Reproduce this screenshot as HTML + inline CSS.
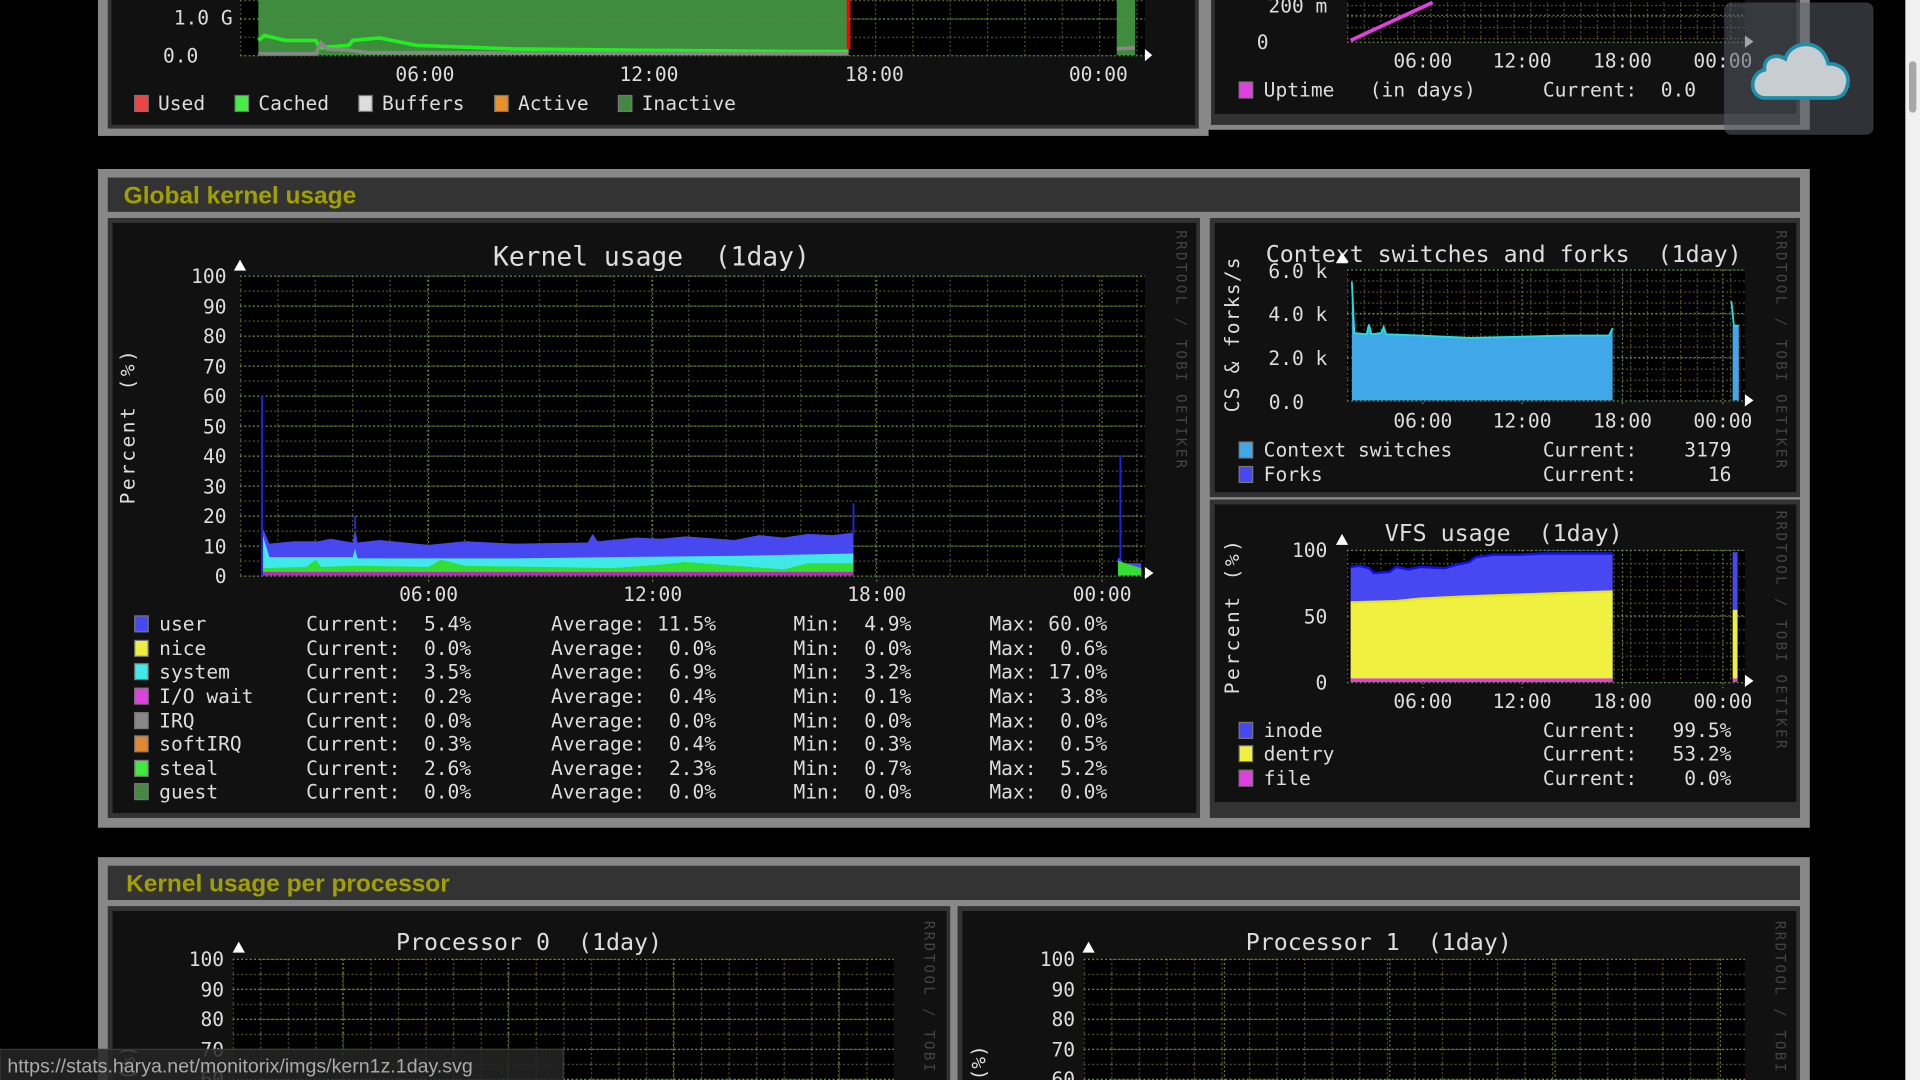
<!DOCTYPE html>
<html><head><meta charset="utf-8"><style>
html,body{margin:0;padding:0;background:#000;width:1920px;height:1080px;overflow:hidden}
svg{display:block}
text{font-family:"DejaVu Sans Mono","Liberation Mono",monospace;fill:#ddd;white-space:pre}
.h{font-family:"Liberation Sans",sans-serif;font-weight:bold;fill:#a0a000;font-size:20px}
.t{font-size:21.5px;fill:#ddd}
.l{font-size:16px}
.w{font-size:11.5px;fill:#444;letter-spacing:2px}
.mj{stroke:#5f8a4a;stroke-width:1;stroke-dasharray:1.5,2}
</style></head><body>
<svg width="1920" height="1080" viewBox="0 0 1568 882" preserveAspectRatio="none" xmlns="http://www.w3.org/2000/svg">
<defs>
<pattern id="g1" width="30.5" height="12.25" patternUnits="userSpaceOnUse" x="196" y="225">
<path d="M0 0.5H30.5M0.5 0V12.25" stroke="#58582a" stroke-width="1" stroke-dasharray="1.5,2" fill="none"/></pattern>
<pattern id="g2" width="13.6" height="9" patternUnits="userSpaceOnUse" x="1100" y="220">
<path d="M0 0.5H13.6M0.5 0V9" stroke="#58582a" stroke-width="1" stroke-dasharray="1.5,2" fill="none"/></pattern>
<pattern id="g3" width="13.6" height="10.8" patternUnits="userSpaceOnUse" x="1100" y="449">
<path d="M0 0.5H13.6M0.5 0V10.8" stroke="#58582a" stroke-width="1" stroke-dasharray="1.5,2" fill="none"/></pattern>
<pattern id="g4" width="22.5" height="12.25" patternUnits="userSpaceOnUse" x="190" y="783">
<path d="M0 0.5H22.5M0.5 0V12.25" stroke="#58582a" stroke-width="1" stroke-dasharray="1.5,2" fill="none"/></pattern>
<pattern id="g5" width="22.5" height="12.25" patternUnits="userSpaceOnUse" x="885" y="783">
<path d="M0 0.5H22.5M0.5 0V12.25" stroke="#58582a" stroke-width="1" stroke-dasharray="1.5,2" fill="none"/></pattern>
<pattern id="g6" width="30.5" height="15" patternUnits="userSpaceOnUse" x="196" y="0">
<path d="M0 0.5H30.5M0.5 0V15" stroke="#58582a" stroke-width="1" stroke-dasharray="1.5,2" fill="none"/></pattern>
</defs>
<rect width="1568" height="882" fill="#000"/>

<!-- ===== top sections ===== -->
<rect x="80" y="-10" width="907" height="121" fill="#888"/>
<rect x="88" y="-10" width="891" height="115" fill="#333"/>
<rect x="91" y="-10" width="885" height="112" fill="#111"/>
<rect x="985" y="-10" width="493" height="116" fill="#888"/>
<rect x="989" y="-10" width="481" height="112" fill="#333"/>
<rect x="992" y="-10" width="475" height="103" fill="#111"/>

<!-- memory graph -->
<rect x="196" y="0" width="739" height="45" fill="#000"/>
<rect x="196" y="0" width="739" height="45" fill="url(#g6)"/>
<path d="M211 0H693V45H211Z M912 0H927V45H912Z" fill="#3f8c3f"/>
<path d="M211 33L216 29L233 33L258 33L261 39L285 37L288 33L310 31L325 34L340 37L420 40L520 41L640 42L693 42" stroke="#22ee22" stroke-width="3" fill="none"/>
<path d="M211 44L258 44L262 35L267 40L285 41L300 43L693 44 M912 40L927 39" stroke="#888" stroke-width="3" fill="none"/>
<line x1="693" y1="0" x2="693" y2="40" stroke="#f00" stroke-width="3"/>
<line x1="196" y1="15.5" x2="935" y2="15.5" class="mj"/>
<line x1="196" y1="45.5" x2="935" y2="45.5" class="mj"/>
<path d="M935 40L941 45L935 50Z" fill="#fff"/>
<text x="190" y="20" text-anchor="end" class="l">1.0 G</text>
<text x="162" y="51" text-anchor="end" class="l">0.0</text>
<text x="347" y="66" text-anchor="middle" class="l">06:00</text>
<text x="530" y="66" text-anchor="middle" class="l">12:00</text>
<text x="714" y="66" text-anchor="middle" class="l">18:00</text>
<text x="897" y="66" text-anchor="middle" class="l">00:00</text>
<rect x="110" y="78" width="11" height="13" fill="#e44" stroke="#777"/><text x="129" y="90" class="l">Used</text>
<rect x="192" y="78" width="11" height="13" fill="#4e4" stroke="#777"/><text x="211" y="90" class="l">Cached</text>
<rect x="293" y="78" width="11" height="13" fill="#ddd" stroke="#777"/><text x="312" y="90" class="l">Buffers</text>
<rect x="404" y="78" width="11" height="13" fill="#e8902a" stroke="#777"/><text x="423" y="90" class="l">Active</text>
<rect x="505" y="78" width="11" height="13" fill="#448844" stroke="#777"/><text x="524" y="90" class="l">Inactive</text>

<!-- uptime graph -->
<rect x="1100" y="0" width="325" height="34" fill="#000"/>
<rect x="1100" y="0" width="325" height="34" fill="url(#g2)"/>
<line x1="1100" y1="34.5" x2="1425" y2="34.5" class="mj"/>
<line x1="1100" y1="12.5" x2="1425" y2="12.5" class="mj"/>
<path d="M1103 33L1170 2" stroke="#e040e0" stroke-width="3"/>
<path d="M1425 29L1432 34L1425 39Z" fill="#fff"/>
<text x="1084" y="10" text-anchor="end" class="l">200 m</text>
<text x="1036" y="40" text-anchor="end" class="l">0</text>
<text x="1162" y="55" text-anchor="middle" class="l">06:00</text>
<text x="1243" y="55" text-anchor="middle" class="l">12:00</text>
<text x="1325" y="55" text-anchor="middle" class="l">18:00</text>
<text x="1407" y="55" text-anchor="middle" class="l">00:00</text>
<rect x="1012" y="67" width="11" height="13" fill="#e040e0" stroke="#777"/>
<text x="1032" y="79" class="l">Uptime   (in days)</text>
<text x="1260" y="79" class="l">Current:  0.0</text>

<!-- ===== Global kernel usage ===== -->
<rect x="80" y="138" width="1398" height="538" fill="#888"/>
<rect x="88" y="145" width="1382" height="28" fill="#333"/>
<text x="101" y="166" class="h">Global kernel usage</text>
<rect x="88" y="178" width="892" height="490" fill="#333"/>
<rect x="92" y="182" width="885" height="482" fill="#111"/>
<rect x="988" y="178" width="482" height="228" fill="#333"/>
<rect x="992" y="182" width="475" height="220" fill="#111"/>
<rect x="988" y="408" width="482" height="260" fill="#333"/>
<rect x="992" y="412" width="475" height="243" fill="#111"/>

<!-- kernel graph -->
<text x="532" y="217" text-anchor="middle" class="t">Kernel usage  (1day)</text>
<rect x="196" y="225" width="739" height="245" fill="#000"/>
<rect x="196" y="225" width="739" height="245" fill="url(#g1)"/>
<g class="mj">
<line x1="196" y1="225.5" x2="935" y2="225.5"/><line x1="196" y1="250" x2="935" y2="250"/><line x1="196" y1="274.5" x2="935" y2="274.5"/><line x1="196" y1="299" x2="935" y2="299"/><line x1="196" y1="323.5" x2="935" y2="323.5"/><line x1="196" y1="348" x2="935" y2="348"/><line x1="196" y1="372.5" x2="935" y2="372.5"/><line x1="196" y1="397" x2="935" y2="397"/><line x1="196" y1="421.5" x2="935" y2="421.5"/><line x1="196" y1="446" x2="935" y2="446"/><line x1="196" y1="470.5" x2="935" y2="470.5"/>
<line x1="350" y1="225" x2="350" y2="475"/><line x1="533" y1="225" x2="533" y2="475"/><line x1="716" y1="225" x2="716" y2="475"/><line x1="900" y1="225" x2="900" y2="475"/>
</g>
<path d="M214 470L214 430L220 444L240 442L260 442L270 440L288 443L290 432L292 443L310 441L350 445L380 442L420 444L480 443L484 436L488 442L520 439L540 440L560 438L600 441L620 437L640 439L660 436L680 437L697 435L697 470Z" fill="#4848f0"/>
<path d="M214 470L214 435L220 455L288 455L290 448L292 456L420 456L500 455L600 454L697 452L697 470Z" fill="#40e8e8"/>
<path d="M214 470L214 464L250 463L258 457L262 463L290 462L350 463L360 457L380 462L500 464L540 461L560 459L600 462L640 465L660 460L697 460L697 470Z" fill="#33dd33"/>
<path d="M214 470H697V467H214Z" fill="#b030b0"/>
<path d="M214 470V323M290 432V421M697 437V411M915 470V372" stroke="#2222ee" stroke-width="1.5"/>
<path d="M913 470V455L918 460L932 460V470Z" fill="#4848f0"/>
<path d="M913 470V458L932 464V470Z" fill="#33dd33"/>
<path d="M196 212L201 221H191Z M935 463L942 468L935 473Z" fill="#fff"/>
<g class="l" text-anchor="end">
<text x="185" y="231">100</text><text x="185" y="256">90</text><text x="185" y="280">80</text><text x="185" y="305">70</text><text x="185" y="329">60</text><text x="185" y="354">50</text><text x="185" y="378">40</text><text x="185" y="403">30</text><text x="185" y="427">20</text><text x="185" y="452">10</text><text x="185" y="476">0</text>
</g>
<text transform="translate(110,348) rotate(-90)" text-anchor="middle" class="l" style="letter-spacing:2px">Percent (%)</text>
<text x="350" y="491" text-anchor="middle" class="l">06:00</text>
<text x="533" y="491" text-anchor="middle" class="l">12:00</text>
<text x="716" y="491" text-anchor="middle" class="l">18:00</text>
<text x="900" y="491" text-anchor="middle" class="l">00:00</text>
<text transform="translate(961,188) rotate(90)" class="w">RRDTOOL / TOBI OETIKER</text>
<g class="l">
<rect x="110" y="503" width="11" height="13" fill="#4848f0" stroke="#777"/><text x="130" y="515">user</text><text x="250" y="515">Current:  5.4%</text><text x="450" y="515">Average: 11.5%</text><text x="648" y="515">Min:  4.9%</text><text x="808" y="515">Max: 60.0%</text>
<rect x="110" y="523" width="11" height="13" fill="#eeee40" stroke="#777"/><text x="130" y="535">nice</text><text x="250" y="535">Current:  0.0%</text><text x="450" y="535">Average:  0.0%</text><text x="648" y="535">Min:  0.0%</text><text x="808" y="535">Max:  0.6%</text>
<rect x="110" y="542" width="11" height="13" fill="#40e8e8" stroke="#777"/><text x="130" y="554">system</text><text x="250" y="554">Current:  3.5%</text><text x="450" y="554">Average:  6.9%</text><text x="648" y="554">Min:  3.2%</text><text x="808" y="554">Max: 17.0%</text>
<rect x="110" y="562" width="11" height="13" fill="#e040e0" stroke="#777"/><text x="130" y="574">I/O wait</text><text x="250" y="574">Current:  0.2%</text><text x="450" y="574">Average:  0.4%</text><text x="648" y="574">Min:  0.1%</text><text x="808" y="574">Max:  3.8%</text>
<rect x="110" y="582" width="11" height="13" fill="#888" stroke="#777"/><text x="130" y="594">IRQ</text><text x="250" y="594">Current:  0.0%</text><text x="450" y="594">Average:  0.0%</text><text x="648" y="594">Min:  0.0%</text><text x="808" y="594">Max:  0.0%</text>
<rect x="110" y="601" width="11" height="13" fill="#e08830" stroke="#777"/><text x="130" y="613">softIRQ</text><text x="250" y="613">Current:  0.3%</text><text x="450" y="613">Average:  0.4%</text><text x="648" y="613">Min:  0.3%</text><text x="808" y="613">Max:  0.5%</text>
<rect x="110" y="621" width="11" height="13" fill="#40e840" stroke="#777"/><text x="130" y="633">steal</text><text x="250" y="633">Current:  2.6%</text><text x="450" y="633">Average:  2.3%</text><text x="648" y="633">Min:  0.7%</text><text x="808" y="633">Max:  5.2%</text>
<rect x="110" y="640" width="11" height="13" fill="#448844" stroke="#777"/><text x="130" y="652">guest</text><text x="250" y="652">Current:  0.0%</text><text x="450" y="652">Average:  0.0%</text><text x="648" y="652">Min:  0.0%</text><text x="808" y="652">Max:  0.0%</text>
</g>

<!-- context switches -->
<text x="1228" y="214" text-anchor="middle" class="t" style="font-size:19px">Context switches and forks  (1day)</text>
<rect x="1100" y="220" width="325" height="107" fill="#000"/>
<rect x="1100" y="220" width="325" height="107" fill="url(#g2)"/>
<g class="mj"><line x1="1100" y1="220.5" x2="1425" y2="220.5"/><line x1="1100" y1="256" x2="1425" y2="256"/><line x1="1100" y1="292" x2="1425" y2="292"/><line x1="1100" y1="327.5" x2="1425" y2="327.5"/>
<line x1="1162" y1="220" x2="1162" y2="332"/><line x1="1243" y1="220" x2="1243" y2="332"/><line x1="1325" y1="220" x2="1325" y2="332"/><line x1="1407" y1="220" x2="1407" y2="332"/></g>
<path d="M1104 327V230L1106 272L1116 273L1118 265L1120 273L1128 272L1130 267L1132 273L1160 274L1200 276L1240 275L1280 274L1314 274L1317 268V327Z" fill="#40a8e8"/>
<path d="M1104 230L1106 272L1116 273L1118 265L1120 273L1128 272L1130 267L1132 273L1160 274L1200 276L1240 275L1280 274L1314 274L1317 268" stroke="#20e0e0" stroke-width="1.5" fill="none"/>
<path d="M1415 327V266L1420 266V327Z" fill="#40a8e8"/>
<path d="M1414 246L1416 266L1420 266" stroke="#20e0e0" stroke-width="1.5" fill="none"/>
<path d="M1096 206L1101 215H1091Z M1425 322L1432 327L1425 332Z" fill="#fff"/>
<g class="l" text-anchor="end"><text x="1084" y="227">6.0 k</text><text x="1084" y="262">4.0 k</text><text x="1084" y="298">2.0 k</text><text x="1065" y="334">0.0</text></g>
<text transform="translate(1012,273) rotate(-90)" text-anchor="middle" class="l" style="letter-spacing:1px">CS &amp; forks/s</text>
<text x="1162" y="349" text-anchor="middle" class="l">06:00</text><text x="1243" y="349" text-anchor="middle" class="l">12:00</text><text x="1325" y="349" text-anchor="middle" class="l">18:00</text><text x="1407" y="349" text-anchor="middle" class="l">00:00</text>
<text transform="translate(1451,188) rotate(90)" class="w">RRDTOOL / TOBI OETIKER</text>
<rect x="1012" y="361" width="11" height="13" fill="#40a8e8" stroke="#777"/><text x="1032" y="373" class="l">Context switches</text><text x="1260" y="373" class="l">Current:    3179</text>
<rect x="1012" y="381" width="11" height="13" fill="#4848f0" stroke="#777"/><text x="1032" y="393" class="l">Forks</text><text x="1260" y="393" class="l">Current:      16</text>

<!-- VFS -->
<text x="1228" y="442" text-anchor="middle" class="t" style="font-size:19px">VFS usage  (1day)</text>
<rect x="1100" y="449" width="325" height="108" fill="#000"/>
<rect x="1100" y="449" width="325" height="108" fill="url(#g3)"/>
<g class="mj"><line x1="1100" y1="449.5" x2="1425" y2="449.5"/><line x1="1100" y1="503" x2="1425" y2="503"/><line x1="1100" y1="557.5" x2="1425" y2="557.5"/>
<line x1="1162" y1="449" x2="1162" y2="562"/><line x1="1243" y1="449" x2="1243" y2="562"/><line x1="1325" y1="449" x2="1325" y2="562"/><line x1="1407" y1="449" x2="1407" y2="562"/></g>
<path d="M1103 557V463L1110 462L1118 464L1122 468L1135 467L1140 463L1150 465L1160 463L1180 464L1190 461L1200 459L1205 455L1220 453L1240 453L1260 452L1280 452L1300 452L1317 452V557Z" fill="#4848f0"/>
<path d="M1103 463L1110 462L1118 464L1122 468L1135 467L1140 463L1150 465L1160 463L1180 464L1190 461L1200 459L1205 455L1220 453L1240 453L1260 452L1280 452L1300 452L1317 452" stroke="#1010ee" stroke-width="2" fill="none"/>
<path d="M1103 557V492L1140 491L1160 489L1200 487L1260 485L1317 483V557Z" fill="#f0f040"/>
<path d="M1103 492L1140 491L1160 489L1200 487L1260 485L1317 483" stroke="#e8e810" stroke-width="2" fill="none"/>
<rect x="1103" y="554" width="214" height="3" fill="#e040e0"/>
<rect x="1415" y="451" width="4" height="47" fill="#4848f0"/><rect x="1415" y="498" width="4" height="57" fill="#f0f040"/><rect x="1415" y="554" width="4" height="3" fill="#e040e0"/>
<path d="M1096 436L1101 445H1091Z M1425 551L1432 556L1425 561Z" fill="#fff"/>
<g class="l" text-anchor="end"><text x="1084" y="455">100</text><text x="1084" y="509">50</text><text x="1084" y="563">0</text></g>
<text transform="translate(1012,503) rotate(-90)" text-anchor="middle" class="l" style="letter-spacing:2px">Percent (%)</text>
<text x="1162" y="578" text-anchor="middle" class="l">06:00</text><text x="1243" y="578" text-anchor="middle" class="l">12:00</text><text x="1325" y="578" text-anchor="middle" class="l">18:00</text><text x="1407" y="578" text-anchor="middle" class="l">00:00</text>
<text transform="translate(1451,417) rotate(90)" class="w">RRDTOOL / TOBI OETIKER</text>
<rect x="1012" y="590" width="11" height="13" fill="#4848f0" stroke="#777"/><text x="1032" y="602" class="l">inode</text><text x="1260" y="602" class="l">Current:   99.5%</text>
<rect x="1012" y="609" width="11" height="13" fill="#f0f040" stroke="#777"/><text x="1032" y="621" class="l">dentry</text><text x="1260" y="621" class="l">Current:   53.2%</text>
<rect x="1012" y="629" width="11" height="13" fill="#e040e0" stroke="#777"/><text x="1032" y="641" class="l">file</text><text x="1260" y="641" class="l">Current:    0.0%</text>

<!-- ===== Kernel usage per processor ===== -->
<rect x="80" y="700" width="1398" height="190" fill="#888"/>
<rect x="88" y="707" width="1382" height="28" fill="#333"/>
<text x="103" y="728" class="h">Kernel usage per processor</text>
<rect x="88" y="740" width="688" height="150" fill="#333"/>
<rect x="92" y="744" width="681" height="146" fill="#111"/>
<rect x="782" y="740" width="688" height="150" fill="#333"/>
<rect x="786" y="744" width="681" height="146" fill="#111"/>

<text x="432" y="776" text-anchor="middle" class="t" style="font-size:19px">Processor 0  (1day)</text>
<rect x="190" y="783" width="540" height="110" fill="#000"/>
<rect x="190" y="783" width="540" height="110" fill="url(#g4)"/>
<g class="mj"><line x1="190" y1="783.5" x2="730" y2="783.5"/><line x1="190" y1="808" x2="730" y2="808"/><line x1="190" y1="832.5" x2="730" y2="832.5"/><line x1="190" y1="857" x2="730" y2="857"/><line x1="190" y1="881.5" x2="730" y2="881.5"/>
<line x1="280" y1="783" x2="280" y2="882"/><line x1="415" y1="783" x2="415" y2="882"/><line x1="550" y1="783" x2="550" y2="882"/><line x1="685" y1="783" x2="685" y2="882"/></g>
<path d="M195 769L200 778H190Z" fill="#fff"/>
<g class="l" text-anchor="end"><text x="183" y="789">100</text><text x="183" y="814">90</text><text x="183" y="838">80</text><text x="183" y="863">70</text><text x="183" y="887">60</text></g>
<text transform="translate(110,868) rotate(-90)" text-anchor="middle" class="l">(%)</text>
<text transform="translate(755,752) rotate(90)" class="w">RRDTOOL / TOBI OETIKER</text>

<text x="1126" y="776" text-anchor="middle" class="t" style="font-size:19px">Processor 1  (1day)</text>
<rect x="885" y="783" width="540" height="110" fill="#000"/>
<rect x="885" y="783" width="540" height="110" fill="url(#g5)"/>
<g class="mj"><line x1="885" y1="783.5" x2="1425" y2="783.5"/><line x1="885" y1="808" x2="1425" y2="808"/><line x1="885" y1="832.5" x2="1425" y2="832.5"/><line x1="885" y1="857" x2="1425" y2="857"/><line x1="885" y1="881.5" x2="1425" y2="881.5"/>
<line x1="1000" y1="783" x2="1000" y2="882"/><line x1="1135" y1="783" x2="1135" y2="882"/><line x1="1270" y1="783" x2="1270" y2="882"/><line x1="1405" y1="783" x2="1405" y2="882"/></g>
<path d="M889 769L894 778H884Z" fill="#fff"/>
<g class="l" text-anchor="end"><text x="878" y="789">100</text><text x="878" y="814">90</text><text x="878" y="838">80</text><text x="878" y="863">70</text><text x="878" y="887">60</text></g>
<text transform="translate(805,868) rotate(-90)" text-anchor="middle" class="l">(%)</text>
<text transform="translate(1450,752) rotate(90)" class="w">RRDTOOL / TOBI OETIKER</text>

<!-- cloud overlay -->
<rect x="1408" y="2" width="122" height="108" rx="6" fill="#555c66" fill-opacity="0.55"/>
<path d="M1442 80 C1428 80 1428 60 1441 57 C1440 47 1450 43 1458 48 C1462 33 1488 30 1493 52 C1506 52 1512 62 1508 72 C1506 78 1502 80 1496 80 Z" fill="#c8cdd2" stroke="#1e8fa8" stroke-width="3"/>

<!-- scrollbar -->
<rect x="1556" y="0" width="12" height="882" fill="#f0f0f0"/>
<rect x="1559" y="50" width="6" height="42" rx="3" fill="#a8a8a8"/>

<!-- status bubble -->
<rect x="0" y="857" width="460" height="26" fill="#262626" fill-opacity="0.85" stroke="#3a3a3a"/>
<text x="6" y="876" style="font-family:'Liberation Sans',sans-serif;font-size:16px;fill:#aaa">https://stats.harya.net/monitorix/imgs/kern1z.1day.svg</text>
</svg>
</body></html>
